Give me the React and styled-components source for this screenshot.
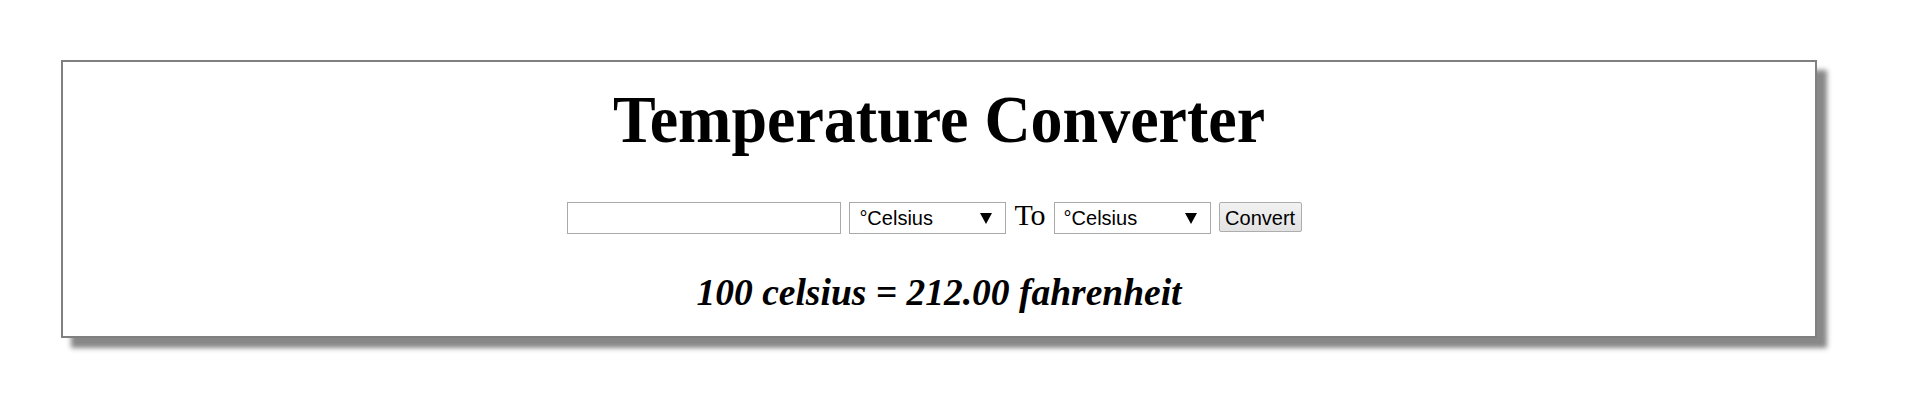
import { useState } from "react";
import styled, { createGlobalStyle } from "styled-components";

const GlobalStyle = createGlobalStyle`
   body {
      margin: 8px;
      background: #ffffff;
      font-family: "Liberation Serif", "Times New Roman", serif;
   }
`

const units = ["Celsius", "Fahrenheit", "Kelvin"]

const UnitSelect = ({ value, onChange }) => (
   <SelectWrap>
      <Select value={value} onChange={(e) => onChange(e.target.value)}>
         {units.map(u => (
            <option key={u} value={u}>°{u}</option>
         ))}
      </Select>
      <Arrow viewBox="0 0 12 11" aria-hidden="true">
         <polygon points="0,0 12,0 6,11" fill="#000" />
      </Arrow>
   </SelectWrap>
)

const App = () => {
   const [value, setValue] = useState("")
   const [from, setFrom] = useState("Celsius")
   const [to, setTo] = useState("Celsius")

   return (
      <Page>
         <GlobalStyle />
         <Card>
            <Title>Temperature Converter</Title>
            <Controls>
               <ValueInput value={value} onChange={(e) => setValue(e.target.value)} />
               <UnitSelect value={from} onChange={setFrom} />
               <ToLabel>To</ToLabel>
               <UnitSelect value={to} onChange={setTo} />
               <ConvertBtn>Convert</ConvertBtn>
            </Controls>
            <Result>100 celsius = 212.00 fahrenheit</Result>
         </Card>
      </Page>
   );
}

// styles
const Page = styled.div`
   padding: 52px 0 30px 53px;
`

const Card = styled.div`
   box-sizing: border-box;
   width: 1756px;
   padding: 0 0 22px;
   display: flex;
   flex-direction: column;
   align-items: center;
   background: #ffffff;
   border: 2px solid #808080;
   box-shadow: 10px 10px 5px #888888;
`

const Title = styled.h1`
   margin: 21px 0 0;
   font-size: 64px;
   line-height: 74px;
   font-weight: bold;
   color: #000;
   transform: scaleY(1.06);
`

const Controls = styled.div`
   display: flex;
   align-items: flex-start;
   gap: 8px;
   margin-top: 45px;
   margin-left: -9px;
   height: 32px;
   font-family: "Liberation Sans", Arial, sans-serif;
   font-size: 20px;
`

const ValueInput = styled.input`
   box-sizing: border-box;
   width: 274px;
   height: 32px;
   margin: 0;
   padding: 0 6px;
   border: 1px solid #a9a9a9;
   font: inherit;
   outline: none;
`

const SelectWrap = styled.div`
   position: relative;
   width: 157px;
   height: 32px;
`

const Select = styled.select`
   box-sizing: border-box;
   width: 100%;
   height: 100%;
   margin: 0;
   padding: 0 0 0 9px;
   appearance: none;
   background: #ffffff;
   border: 1px solid #a9a9a9;
   border-radius: 0;
   font: inherit;
   color: #000;
`

const Arrow = styled.svg`
   position: absolute;
   right: 14px;
   top: 11px;
   width: 12px;
   height: 11px;
   pointer-events: none;
`

const ToLabel = styled.span`
   font-family: "Liberation Serif", "Times New Roman", serif;
   font-size: 30px;
   line-height: 26px;
   color: #000;
`

const ConvertBtn = styled.button`
   box-sizing: border-box;
   width: 83px;
   height: 30px;
   margin: 0;
   padding: 2px 0 0;
   font: inherit;
   color: #000;
   background: linear-gradient(#f2f2f2, #e2e2e2);
   border: 1px solid #adadad;
   border-radius: 2px;
   cursor: pointer;
`

const Result = styled.h2`
   margin: 38px 0 0;
   font-size: 37.5px;
   line-height: 42px;
   font-weight: bold;
   font-style: italic;
   color: #000;
`

export default App;
